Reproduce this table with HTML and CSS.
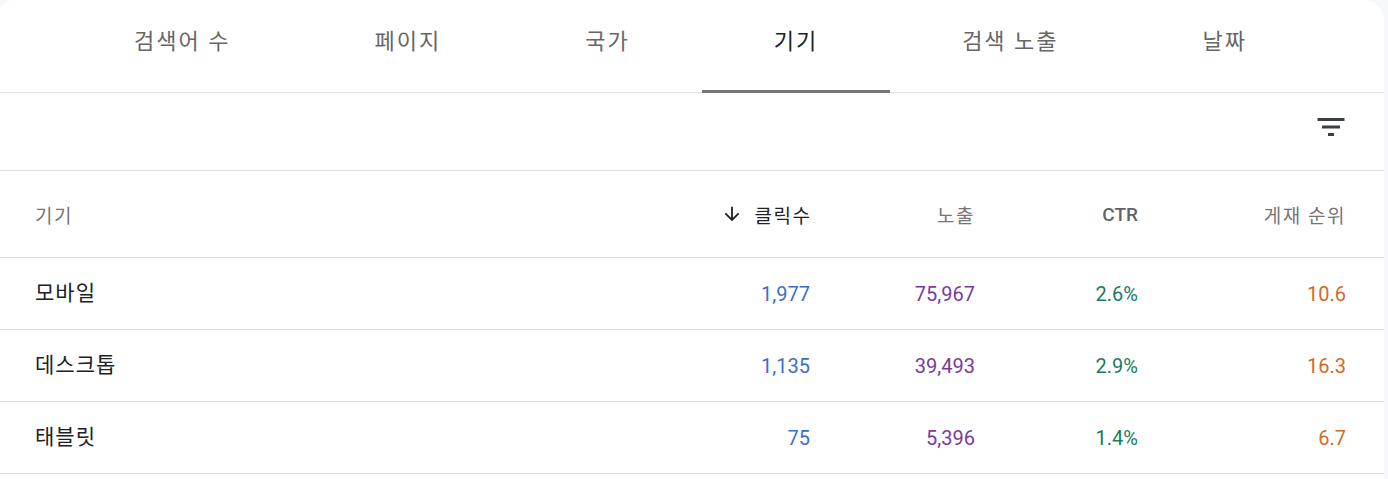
FILE: index.html
```html
<!DOCTYPE html>
<html lang="ko">
<head>
    <meta charset="UTF-8">
    <meta name="viewport" content="width=device-width, initial-scale=1.0">
    <title>기기별 실적</title>
    <link rel="stylesheet" href="styles.css">
</head>
<body>
    <div class="card">
        <div class="tabs">
            <div class="tab">검색어 수</div>
            <div class="tab">페이지</div>
            <div class="tab">국가</div>
            <div class="tab active">기기</div>
            <div class="tab">검색 노출</div>
            <div class="tab">날짜</div>
        </div>

        <div class="toolbar">
            <svg class="filter-icon" viewBox="0 0 24 24" width="36" height="36">
                <path d="M10 18h4v-2h-4v2zM3 6v2h18V6H3zm3 7h12v-2H6v2z"/>
            </svg>
        </div>

        <div class="table">
            <div class="row head">
                <div class="cell name">기기</div>
                <div class="cell num sorted">
                    <svg class="arrow" viewBox="0 0 24 24" width="22" height="22">
                        <path d="M20 12l-1.41-1.41L13 16.17V4h-2v12.17l-5.58-5.59L4 12l8 8 8-8z"/>
                    </svg>
                    <span class="ko">클릭수</span>
                </div>
                <div class="cell num ko">노출</div>
                <div class="cell num latin">CTR</div>
                <div class="cell num ko">게재 순위</div>
            </div>

            <div class="row">
                <div class="cell name">모바일</div>
                <div class="cell num clicks">1,977</div>
                <div class="cell num impressions">75,967</div>
                <div class="cell num ctr">2.6%</div>
                <div class="cell num position">10.6</div>
            </div>

            <div class="row">
                <div class="cell name">데스크톱</div>
                <div class="cell num clicks">1,135</div>
                <div class="cell num impressions">39,493</div>
                <div class="cell num ctr">2.9%</div>
                <div class="cell num position">16.3</div>
            </div>

            <div class="row">
                <div class="cell name">태블릿</div>
                <div class="cell num clicks">75</div>
                <div class="cell num impressions">5,396</div>
                <div class="cell num ctr">1.4%</div>
                <div class="cell num position">6.7</div>
            </div>
        </div>
    </div>
</body>
</html>
```

FILE: styles.css
```css
body {
    margin: 0;
    background-color: #f6f8fc;
    font-family: Roboto, "Noto Sans CJK KR", sans-serif;
    color: #202124;
}
.card {
    width: 1384px;
    min-height: 479px;
    background-color: #fff;
    border-radius: 14px 20px 0 0;
    box-sizing: border-box;
}
.tabs {
    display: flex;
    height: 93px;
    padding-left: 62px;
    border-bottom: 1px solid #e0e0e0;
    box-sizing: border-box;
}
.tab {
    display: flex;
    align-items: center;
    padding: 0 72px 12px;
    font-size: 22px;
    letter-spacing: 2px;
    color: #666;
    border-bottom: 3px solid transparent;
    margin-bottom: -1px;
}
.tab.active {
    color: #202124;
    border-bottom-color: #757575;
}
.toolbar {
    display: flex;
    justify-content: flex-end;
    height: 78px;
    padding: 16px 35px 0 0;
    border-bottom: 1px solid #e0e0e0;
    box-sizing: border-box;
}
.filter-icon {
    fill: #3c4043;
}
.row {
    display: grid;
    grid-template-columns: 1fr 160px 165px 163px 208px;
    align-items: center;
    height: 72px;
    padding: 0 38px 0 35px;
    border-bottom: 1px solid #e0e0e0;
    box-sizing: border-box;
}
.row.head {
    height: 87px;
}
.cell {
    font-size: 20px;
    white-space: nowrap;
}
.cell.name {
    font-size: 21px;
    letter-spacing: 1px;
    padding-bottom: 6px;
}
.head .cell {
    font-size: 18px;
    color: #757575;
}
.head .cell.name,
.head .ko {
    font-size: 19px;
    letter-spacing: 1.5px;
    padding-bottom: 0;
}
.head .cell.sorted {
    color: #202124;
    display: flex;
    justify-content: flex-end;
    align-items: center;
    gap: 12px;
}
.head .cell.sorted .ko {
    margin-right: -1.5px;
}
.head .cell.latin {
    font-weight: 500;
    color: #5f6368;
    font-size: 19px;
}
.arrow {
    fill: #202124;
}
.num {
    text-align: right;
}
.clicks {
    color: #3a70c4;
}
.impressions {
    color: #7b3a9e;
}
.ctr {
    color: #1a7a62;
}
.position {
    color: #d16a26;
}
```
